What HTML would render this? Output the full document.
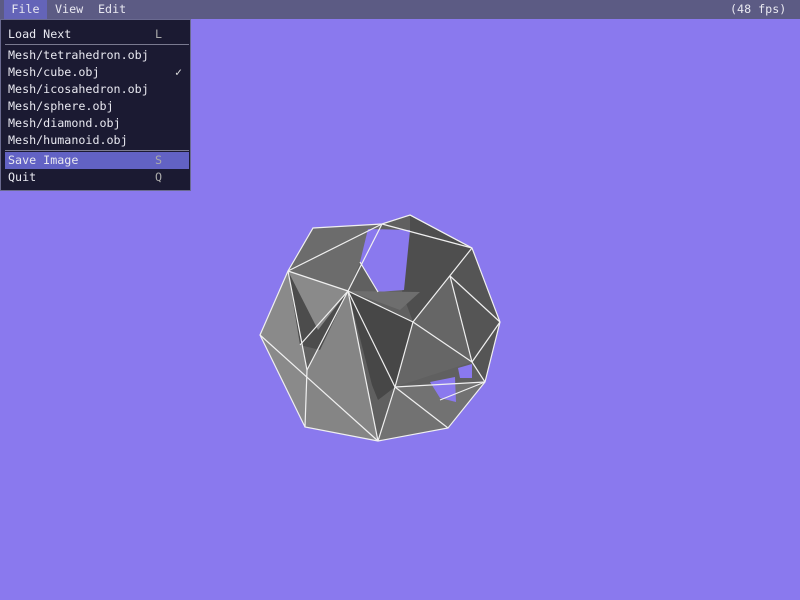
<!DOCTYPE html>
<html><head><style>
html,body{margin:0;padding:0;width:800px;height:600px;overflow:hidden;background:#8a79ee;font-family:"DejaVu Sans Mono","Liberation Mono",monospace;font-size:11.7px;color:#e8e8f0}
#bar{position:absolute;left:0;top:0;width:800px;height:19px;background:#5c5b84}
.mi{position:absolute;top:0;height:19px;line-height:19px;}
#file{left:4px;width:43px;background:#6464b8;text-align:center}
#menu{position:absolute;left:0;top:19px;width:191px;height:172px;background:#1b1a32;border:1px solid #6a6a90;box-sizing:border-box}
.it{position:absolute;left:7px;height:17px;line-height:17px;width:180px}
.k{position:absolute;left:147px;top:0;color:#aaa}
.sep{position:absolute;left:4px;width:184px;height:1px;background:#7a7a90}
#sel{position:absolute;left:4px;top:132px;width:184px;height:17px;background:#6262c4}
</style></head><body>
<svg width="800" height="600" style="position:absolute;left:0;top:0">
<g stroke="none">
<polygon points="313,228 382,224 410,215 472,248 500,322 485,382 448,428 378,441 305,427 260,335 288,271" fill="#606060"/>
<polygon points="472,248 500,322 485,382 472,362 450,276" fill="#555"/>
<polygon points="410,215 472,248 450,276 413,322 402,292 410,232" fill="#4e4e4e"/>
<polygon points="313,228 382,224 362,258 348,291 288,271" fill="#6c6c6c"/>
<polygon points="368,229 410,230 404,290 378,292 360,262" fill="#8a79ee"/>
<polygon points="260,335 288,271 307,370 305,427" fill="#8a8a8a"/>
<polygon points="307,370 348,291 378,441 305,427" fill="#858585"/>
<polygon points="288,271 348,291 320,350 300,345" fill="#4c4c4c"/>
<polygon points="288,271 348,291 318,330" fill="#8a8a8a"/>
<polygon points="348,291 413,322 395,387 378,400 372,385" fill="#474747"/>
<polygon points="348,291 420,292 400,310" fill="#6e6e6e"/>
<polygon points="413,322 450,276 472,362 395,387" fill="#666"/>
<polygon points="395,387 485,382 448,428 378,441" fill="#727272"/>
<polygon points="430,382 455,377 456,402 440,398" fill="#8a79ee"/>
<polygon points="458,368 472,364 472,378 460,378" fill="#8a79ee"/>
</g>
<g stroke="#f0f0f0" stroke-width="1.2" fill="none">
<polygon points="313,228 382,224 410,215 472,248 500,322 485,382 448,428 378,441 305,427 260,335 288,271"/>
<line x1="288" y1="271" x2="382" y2="224"/>
<line x1="288" y1="271" x2="348" y2="291"/>
<line x1="382" y1="224" x2="348" y2="291"/>
<line x1="410" y1="215" x2="472" y2="248"/>
<line x1="382" y1="224" x2="472" y2="248"/>
<line x1="472" y1="248" x2="413" y2="322"/>
<line x1="450" y1="276" x2="500" y2="322"/>
<line x1="450" y1="276" x2="472" y2="362"/>
<line x1="413" y1="322" x2="472" y2="362"/>
<line x1="472" y1="362" x2="500" y2="322"/>
<line x1="472" y1="362" x2="485" y2="382"/>
<line x1="348" y1="291" x2="413" y2="322"/>
<line x1="348" y1="291" x2="395" y2="387"/>
<line x1="348" y1="291" x2="378" y2="441"/>
<line x1="348" y1="291" x2="307" y2="370"/>
<line x1="348" y1="291" x2="300" y2="345"/>
<line x1="288" y1="271" x2="307" y2="370"/>
<line x1="260" y1="335" x2="378" y2="441"/>
<line x1="307" y1="370" x2="305" y2="427"/>
<line x1="413" y1="322" x2="395" y2="387"/>
<line x1="395" y1="387" x2="485" y2="382"/>
<line x1="395" y1="387" x2="448" y2="428"/>
<line x1="395" y1="387" x2="378" y2="441"/>
<line x1="485" y1="382" x2="440" y2="400"/>
<line x1="360" y1="262" x2="378" y2="292"/>
</g>
</svg>
<div id="bar">
<div class="mi" id="file">File</div>
<div class="mi" style="left:55px">View</div>
<div class="mi" style="left:98px">Edit</div>
<div class="mi" style="left:730px">(48 fps)</div>
</div>
<div id="menu">
<div class="it" style="top:6px">Load Next<span class="k">L</span></div>
<div class="sep" style="top:24px"></div>
<div class="it" style="top:27px">Mesh/tetrahedron.obj</div>
<div class="it" style="top:44px">Mesh/cube.obj<span class="k" style="left:167px;color:#ddd">✓</span></div>
<div class="it" style="top:61px">Mesh/icosahedron.obj</div>
<div class="it" style="top:78px">Mesh/sphere.obj</div>
<div class="it" style="top:95px">Mesh/diamond.obj</div>
<div class="it" style="top:112px">Mesh/humanoid.obj</div>
<div class="sep" style="top:130px"></div>
<div id="sel"></div>
<div class="it" style="top:132px">Save Image<span class="k">S</span></div>
<div class="it" style="top:149px">Quit<span class="k">Q</span></div>
</div>
</body></html>
